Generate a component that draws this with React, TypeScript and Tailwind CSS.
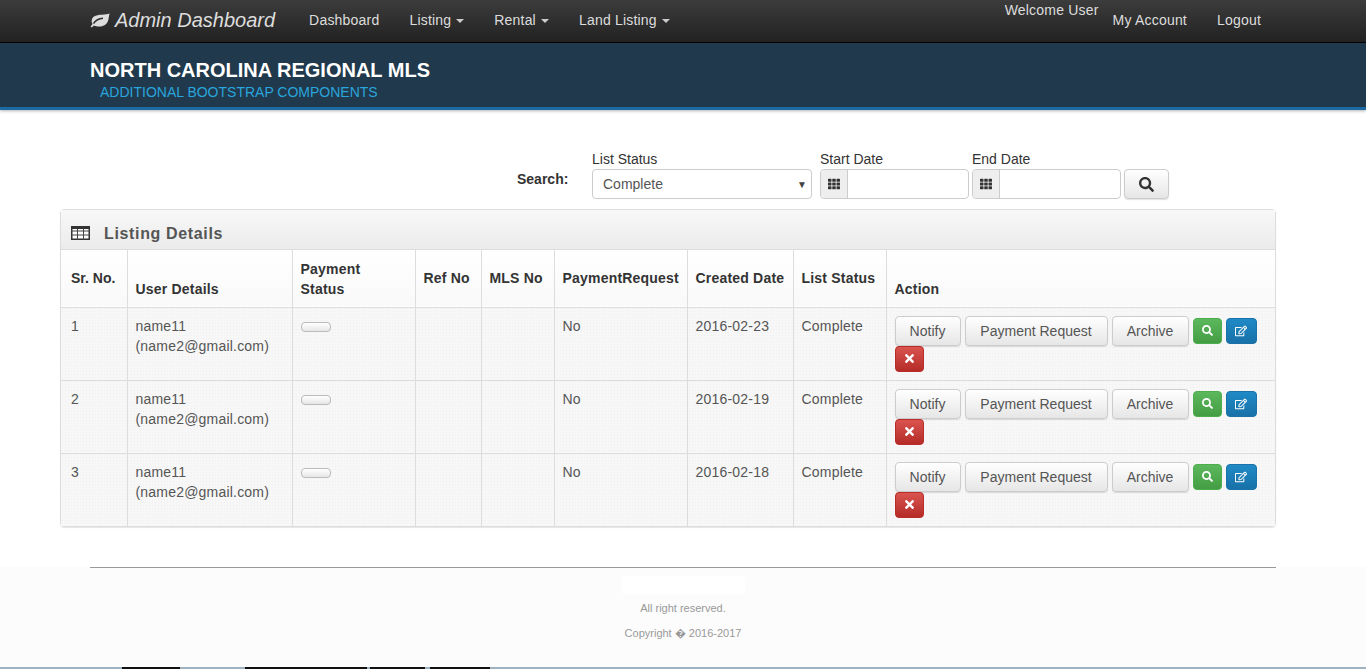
import { FaRegEdit, FaSearch, FaTh, FaTimes } from "react-icons/fa"

const sans = { fontFamily: '"Liberation Sans", Arial, sans-serif' }

const rows = [
  { sr: 1, date: "2016-02-23" },
  { sr: 2, date: "2016-02-19" },
  { sr: 3, date: "2016-02-18" },
]

// bits of the page underneath that show along the bottom edge
const bottomEdge = [
  { w: "w-[122px]", bg: "bg-[#9fb2c2]" },
  { w: "w-[58px]", bg: "bg-[#111]" },
  { w: "w-[65px]", bg: "bg-[#9fb2c2]" },
  { w: "w-[60px]", bg: "bg-[#111]" },
  { w: "w-[62px]", bg: "bg-[#111]" },
  { w: "w-[3px]", bg: "bg-[#9fb2c2]" },
  { w: "w-[55px]", bg: "bg-[#111]" },
  { w: "w-[5px]", bg: "bg-[#9fb2c2]" },
  { w: "w-[60px]", bg: "bg-[#111]" },
  { w: "flex-1", bg: "bg-[#9fb2c2]" },
]

function Caret() {
  return <span className="ml-[5px] inline-block align-middle border-x-4 border-t-4 border-x-transparent border-t-[#ccc]" />
}

function LeafIcon() {
  return (
    <svg width="20" height="15" viewBox="0 0 20 15">
      <path d="M19.6 0.4C16 2.2 8 0.6 4 3.6C1.2 5.7 1.2 9 2.6 11L0.6 13.4L1.8 14.6L4 12.4C7.5 14.2 13.5 14.2 16.5 10.5C19 7.5 18.6 3.5 19.6 0.4Z" fill="#ddd" />
      <path d="M3.5 10.5C5.5 7.5 8.5 5.5 13 5.2" fill="none" stroke="#2c2c2c" strokeWidth="1.4" />
    </svg>
  )
}

function TableIcon() {
  return (
    <svg width="19" height="14" viewBox="0 0 19 14" className="shrink-0 -mt-[2px]">
      <rect x="0.75" y="0.75" width="17.5" height="12.5" fill="#fff" stroke="#333" strokeWidth="1.5" />
      <path d="M0 5H19M0 9H19M6.5 3V14M12.5 3V14" stroke="#444" strokeWidth="1" fill="none" />
      <rect x="0" y="0" width="19" height="3" fill="#333" />
    </svg>
  )
}

function GrayButton({ label, width }: { label: string; width: string }) {
  return (
    <button className={`h-[30px] rounded-[4px] border border-[#ccc] bg-gradient-to-b from-white to-[#e6e6e6] text-[14px] text-[#555] shadow-[0_1px_1px_rgba(0,0,0,0.12)] ${width}`}>
      {label}
    </button>
  )
}

function Navbar() {
  return (
    <nav className="h-[43px] bg-gradient-to-b from-[#3c3c3c] to-[#222] border-b border-black">
      <div className="flex h-[40px] pl-[90px] pr-[105px] text-[14px] tracking-[0.2px] text-[#ddd]">
        <a className="flex items-center gap-[5px] text-[20px] tracking-normal italic text-[#ddd]">
          <LeafIcon />
          Admin Dashboard
        </a>
        <ul className="flex items-center gap-[30px] ml-[34px]">
          <li>Dashboard</li>
          <li>Listing<Caret /></li>
          <li>Rental<Caret /></li>
          <li>Land Listing<Caret /></li>
        </ul>
        <div className="ml-auto flex">
          <span className="mr-[14px]">Welcome User</span>
          <ul className="flex items-center gap-[30px]">
            <li>My Account</li>
            <li>Logout</li>
          </ul>
        </div>
      </div>
    </nav>
  )
}

function Banner() {
  return (
    <div className="h-[67px] pl-[90px] pt-[15px] bg-[#20394c] border-b-[3px] border-[#1b6aa3] shadow-[0_1px_3px_rgba(0,0,0,0.3)]">
      <h1 className="text-[20px] leading-[24px] font-bold text-white">NORTH CAROLINA REGIONAL MLS</h1>
      <p className="pl-[10px] text-[14px] leading-[20px] text-[#2aa5dd]">ADDITIONAL BOOTSTRAP COMPONENTS</p>
    </div>
  )
}

function DateField({ label, width }: { label: string; width: string }) {
  return (
    <div>
      <label className="block text-[14px] leading-[20px] text-[#333]">{label}</label>
      <div className={`flex h-[30px] rounded-[4px] border border-[#ccc] bg-white ${width}`}>
        <span className="flex w-[27px] items-center justify-center border-r border-[#ccc] bg-[#eee] rounded-l-[4px] text-[12px] text-[#333]">
          <FaTh />
        </span>
      </div>
    </div>
  )
}

function SearchBar() {
  return (
    <div className="flex items-end pl-[517px] mt-[41px] h-[48px]">
      <span className="w-[75px] mb-[9px] text-[14px] font-bold text-[#333]">Search:</span>
      <div className="w-[220px]">
        <label className="block text-[14px] leading-[20px] text-[#333]">List Status</label>
        <div className="flex h-[30px] items-center justify-between rounded-[4px] border border-[#ccc] bg-white pl-[10px] pr-[4px] text-[14px] text-[#555]">
          Complete
          <span className="text-[10px] text-[#444]">▼</span>
        </div>
      </div>
      <div className="ml-[8px]"><DateField label="Start Date" width="w-[149px]" /></div>
      <div className="ml-[3px]"><DateField label="End Date" width="w-[149px]" /></div>
      <button className="ml-[3px] flex h-[30px] w-[45px] items-center justify-center rounded-[4px] border border-[#ccc] bg-gradient-to-b from-white to-[#e6e6e6] text-[15px] text-[#333] shadow-[0_1px_1px_rgba(0,0,0,0.12)]">
        <FaSearch />
      </button>
    </div>
  )
}

function ListingTable() {
  const th = "border-l border-[#ddd] first:border-l-0 first:pl-[10px] px-2 pb-[8px] align-bottom text-left text-[14px] leading-[20px] font-bold tracking-[0.2px] text-[#333]"
  const td = "border-l border-[#ddd] first:border-l-0 first:pl-[10px] px-2 pt-[8px] align-top text-[14px] leading-[20px] tracking-[0.2px] text-[#555]"
  return (
    <div className="ml-[60px] mt-[10px] w-[1216px] rounded-[4px] border border-[#ddd] shadow-[0_1px_1px_rgba(0,0,0,0.1)]">
      <div className="flex h-[40px] items-center gap-[14px] pl-[10px] pt-[9px] bg-gradient-to-b from-[#f8f8f8] to-[#ebebeb] border-b border-[#ddd] text-[#555]">
        <TableIcon />
        <h3 className="text-[16px] font-bold tracking-[0.65px]">Listing Details</h3>
      </div>
      <table className="w-full table-fixed border-collapse">
        <colgroup>
          <col className="w-[66px]" />
          <col className="w-[165px]" />
          <col className="w-[123px]" />
          <col className="w-[66px]" />
          <col className="w-[73px]" />
          <col className="w-[133px]" />
          <col className="w-[106px]" />
          <col className="w-[93px]" />
          <col />
        </colgroup>
        <thead>
          <tr className="h-[57px] border-b border-[#ddd] bg-gradient-to-b from-white to-[#f9f9f9]">
            <th className={`${th} !align-middle !pb-0 !tracking-normal`}>Sr. No.</th>
            <th className={th}>User Details</th>
            <th className={th}>Payment<br />Status</th>
            <th className={`${th} !align-middle !pb-0`}>Ref No</th>
            <th className={`${th} !align-middle !pb-0`}>MLS No</th>
            <th className={`${th} !align-middle !pb-0`}>PaymentRequest</th>
            <th className={`${th} !align-middle !pb-0`}>Created Date</th>
            <th className={`${th} !align-middle !pb-0`}>List Status</th>
            <th className={th}>Action</th>
          </tr>
        </thead>
        <tbody>
          {rows.map((r) => (
            <tr
              key={r.sr}
              className="h-[73px] border-b border-[#ddd] last:border-b-0 bg-[#f7f7f7] bg-[radial-gradient(#efefef_1px,transparent_1px)] bg-[length:3px_3px]"
            >
              <td className={td}>{r.sr}</td>
              <td className={td}>name11<br />(name2@gmail.com)</td>
              <td className={td}>
                <span className="block mt-[6px] h-[10px] w-[30px] rounded-[4px] border border-[#bbb] bg-gradient-to-b from-white to-[#e6e6e6]" />
              </td>
              <td className={td}></td>
              <td className={td}></td>
              <td className={td}>No</td>
              <td className={td}>{r.date}</td>
              <td className={td}>Complete</td>
              <td className={`${td} !tracking-normal`}>
                <div className="flex flex-wrap items-center gap-x-[4px] w-[370px]">
                  <GrayButton label="Notify" width="w-[66px]" />
                  <GrayButton label="Payment Request" width="w-[143px]" />
                  <GrayButton label="Archive" width="w-[77px]" />
                  <button className="flex h-[26px] w-[29px] items-center justify-center rounded-[4px] border border-[#4cae4c] bg-gradient-to-b from-[#5cb85c] to-[#449d44] text-[11px] text-white">
                    <FaSearch />
                  </button>
                  <button className="flex h-[26px] w-[31px] items-center justify-center rounded-[4px] border border-[#1a72a8] bg-gradient-to-b from-[#1f8ac6] to-[#1871a8] text-[12px] text-white">
                    <FaRegEdit />
                  </button>
                  <button className="flex h-[26px] w-[29px] items-center justify-center rounded-[4px] border border-[#b92c28] bg-gradient-to-b from-[#d9534f] to-[#b52b27] text-[13px] text-white">
                    <FaTimes />
                  </button>
                </div>
              </td>
            </tr>
          ))}
        </tbody>
      </table>
    </div>
  )
}

function Footer() {
  return (
    <footer className="mt-[40px] h-[100px] bg-[#fcfcfc]">
      <hr className="ml-[90px] mr-[90px] border-t border-[#999]" />
      <div className="flex flex-col items-center text-[11px] text-[#999]">
        <div className="mt-[8px] h-[18px] w-[123px] rounded-[3px] bg-white" />
        <p className="mt-[7px] leading-[14px]">All right reserved.</p>
        <p className="mt-[11px] leading-[14px]">Copyright � 2016-2017</p>
      </div>
    </footer>
  )
}

export default function App() {
  return (
    <div className="h-[669px] overflow-hidden bg-white" style={sans}>
      <Navbar />
      <Banner />
      <SearchBar />
      <ListingTable />
      <Footer />
      <div className="flex h-[2px]">
        {bottomEdge.map((s, i) => (
          <span key={i} className={`${s.w} ${s.bg}`} />
        ))}
      </div>
    </div>
  )
}
